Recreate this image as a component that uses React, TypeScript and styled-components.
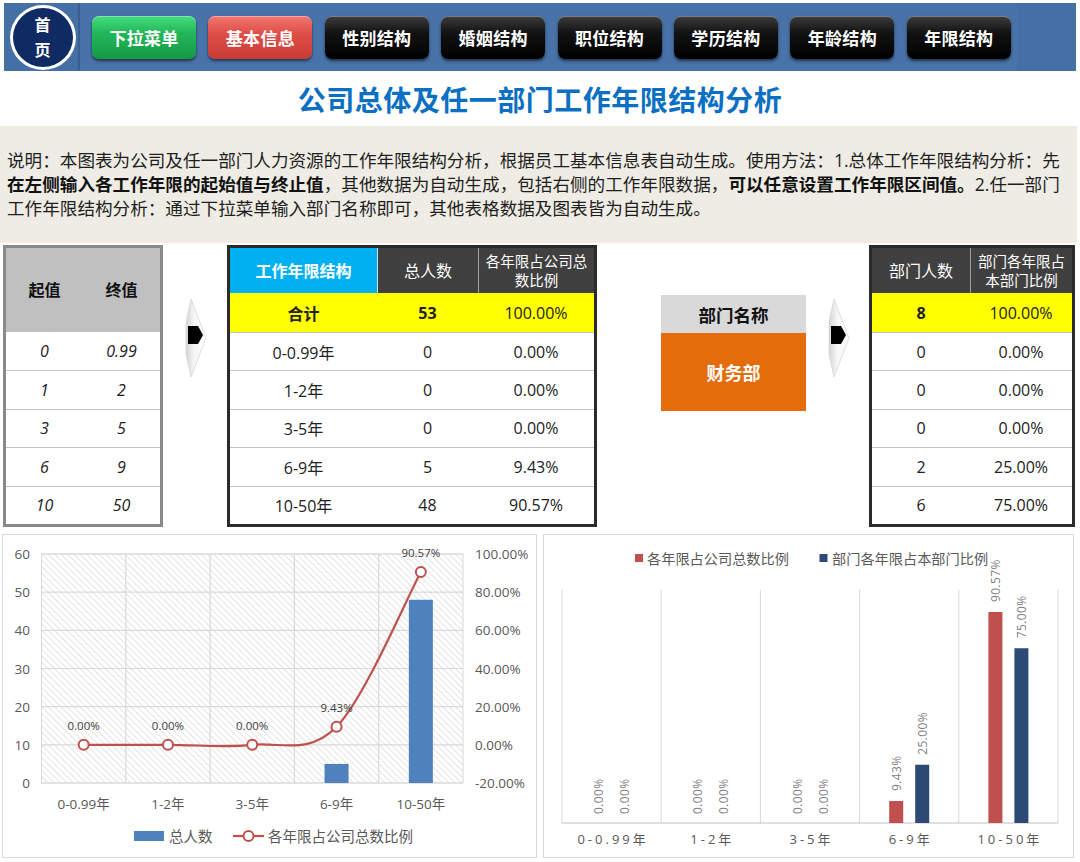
import React from 'react';
import styled, { createGlobalStyle } from 'styled-components';

const GlobalStyle = createGlobalStyle`
  * { box-sizing: border-box; }
  html, body { margin: 0; padding: 0; background: #fff; }
  body {
    font-family: "Open Sans", "Noto Sans CJK SC", sans-serif;
    color: #222;
  }
`;

const cats = ['0-0.99年', '1-2年', '3-5年', '6-9年', '10-50年'];
const ranges = [
  ['0', '0.99'],
  ['1', '2'],
  ['3', '5'],
  ['6', '9'],
  ['10', '50'],
];
const totals = [0, 0, 0, 5, 48];
const companyPct = [0, 0, 0, 9.43, 90.57];
const deptCount = [0, 0, 0, 2, 6];
const deptPct = [0, 0, 0, 25, 75];
const pct = (v: number) => v.toFixed(2) + '%';

const navItems: { label: string; tone: 'green' | 'red' | 'black' }[] = [
  { label: '下拉菜单', tone: 'green' },
  { label: '基本信息', tone: 'red' },
  { label: '性别结构', tone: 'black' },
  { label: '婚姻结构', tone: 'black' },
  { label: '职位结构', tone: 'black' },
  { label: '学历结构', tone: 'black' },
  { label: '年龄结构', tone: 'black' },
  { label: '年限结构', tone: 'black' },
];

const toneBg = {
  green: 'linear-gradient(#44de7e, #22b659 40%, #159a45)',
  red: 'linear-gradient(#f27670, #df4f48 40%, #c93b36)',
  black: 'linear-gradient(#3c3c3c, #121212 40%, #000)',
};

const Page = styled.div`
  width: 1080px;
  height: 862px;
  overflow: hidden;
  padding-top: 3px;
`;

const TopBar = styled.div`
  margin: 0 4px;
  height: 68px;
  display: flex;
  background: #4570a6;
`;

const HomeBlock = styled.div`
  width: 76px;
  padding-left: 3px;
  display: flex;
  align-items: center;
  justify-content: center;
  border-right: 2px solid #3a5e90;
`;

const HomeBadge = styled.div`
  width: 66px;
  height: 65px;
  border-radius: 50%;
  border: 3px solid #fff;
  background: #102a63;
  color: #fff;
  display: flex;
  flex-direction: column;
  align-items: center;
  justify-content: center;
  font-family: "Noto Sans CJK SC", sans-serif;
  font-weight: 700;
  font-size: 16px;
  line-height: 25px;
`;

const NavPanel = styled.div`
  width: 937px;
  display: flex;
  align-items: center;
  gap: 12.4px;
  padding-left: 12px;
  background: #4873a9;
`;

const NavButton = styled.div<{ $tone: 'green' | 'red' | 'black' }>`
  width: 104px;
  height: 43px;
  border-radius: 7px;
  display: flex;
  align-items: center;
  justify-content: center;
  color: #fff;
  font-family: "Noto Sans CJK SC", sans-serif;
  font-weight: 700;
  font-size: 17px;
  letter-spacing: 0.3px;
  background: ${p => toneBg[p.$tone]};
  box-shadow: 0 2px 3px rgba(0, 0, 0, 0.55), inset 0 1px 0 rgba(255, 255, 255, 0.35);
`;

const Title = styled.h1`
  margin: 0;
  height: 55px;
  display: flex;
  align-items: center;
  justify-content: center;
  font-family: "Noto Sans CJK SC", sans-serif;
  font-size: 28px;
  font-weight: 700;
  letter-spacing: 0.5px;
  color: #0b70c2;
`;

const Note = styled.div`
  height: 117px;
  margin-right: 3px;
  background: #eeece4;
  padding: 22px 0 0 7px;
  font-size: 17.6px;
  line-height: 24px;
  color: #1e1e1e;
  white-space: nowrap;
`;

const Emph = styled.strong`
  font-weight: 700;
  color: #111;
`;

const DataRow = styled.div`
  display: flex;
  align-items: flex-start;
  margin-top: 2px;
  height: 282px;
`;

const Frame = styled.div<{ $w: number; $edge: string; $left?: number }>`
  width: ${p => p.$w}px;
  margin-left: ${p => p.$left ?? 0}px;
  border: 3px solid ${p => p.$edge};
  background: #fff;
`;

const Row = styled.div<{ $cols: string; $h: number; $bg?: string; $line?: boolean }>`
  display: grid;
  grid-template-columns: ${p => p.$cols};
  height: ${p => p.$h}px;
  background: ${p => p.$bg ?? '#fff'};
  border-top: ${p => (p.$line ? '1px solid #c4c4c4' : 'none')};
`;

const Cell = styled.div<{ $bold?: boolean; $italic?: boolean }>`
  display: flex;
  align-items: center;
  justify-content: center;
  font-size: 16px;
  font-weight: ${p => (p.$bold ? 700 : 400)};
  font-style: ${p => (p.$italic ? 'italic' : 'normal')};
  color: #222;
`;

const HeadCell = styled.div<{ $bg: string; $sep?: string; $small?: boolean; $bold?: boolean; $dark?: boolean }>`
  display: flex;
  align-items: center;
  justify-content: center;
  text-align: center;
  background: ${p => p.$bg};
  border-left: ${p => (p.$sep ? `1px solid ${p.$sep}` : 'none')};
  color: ${p => (p.$dark ? '#111' : '#fff')};
  font-size: ${p => (p.$small ? '14.5px' : '16px')};
  line-height: ${p => (p.$small ? '19px' : '22px')};
  font-weight: ${p => (p.$bold ? 700 : 400)};
`;

const ArrowSlot = styled.div<{ $w: number }>`
  width: ${p => p.$w}px;
  display: flex;
  justify-content: center;
  padding-top: 53px;
`;

const Gap = styled.div<{ $w: number }>`
  width: ${p => p.$w}px;
`;

const DeptBlock = styled.div`
  width: 145px;
  margin-top: 50px;
`;

const DeptHead = styled.div`
  height: 38px;
  background: #d9d9d9;
  display: flex;
  align-items: center;
  justify-content: center;
  font-family: "Noto Sans CJK SC", sans-serif;
  font-weight: 700;
  font-size: 17.5px;
  color: #111;
`;

const DeptValue = styled.div`
  height: 78px;
  background: #e46c0a;
  display: flex;
  align-items: center;
  justify-content: center;
  font-family: "Noto Sans CJK SC", sans-serif;
  font-weight: 700;
  font-size: 18px;
  color: #fff;
`;

const ChartRow = styled.div`
  display: flex;
  align-items: flex-start;
  gap: 6px;
  margin-top: 7px;
  padding-left: 2px;
`;

const ChartPanel = styled.div<{ $w: number }>`
  width: ${p => p.$w}px;
  height: 324px;
  border: 1px solid #d9d9d9;
  background: #fff;
  svg {
    display: block;
  }
`;

function Arrow() {
  return (
    <svg width="26" height="80" viewBox="0 0 26 80">
      <defs>
        <linearGradient id="arrowFace" x1="0" y1="0" x2="1" y2="0">
          <stop offset="0" stopColor="#d4d4d4" />
          <stop offset="0.4" stopColor="#f6f6f6" />
          <stop offset="1" stopColor="#ffffff" />
        </linearGradient>
      </defs>
      <polygon points="9,1 24,40 9,79 4,56 4,24" fill="url(#arrowFace)" stroke="#d6d6d6" strokeWidth="0.8" />
      <polygon points="6,28 16,28 21,37 16,46 6,46" fill="#000" />
    </svg>
  );
}

function smoothPath(pts: number[][]) {
  let d = `M${pts[0][0]},${pts[0][1]}`;
  for (let i = 0; i < pts.length - 1; i++) {
    const p0 = pts[i - 1] ?? pts[i];
    const p1 = pts[i];
    const p2 = pts[i + 1];
    const p3 = pts[i + 2] ?? p2;
    const c1x = p1[0] + (p2[0] - p0[0]) / 6;
    const c1y = p1[1] + (p2[1] - p0[1]) / 6;
    const c2x = p2[0] - (p3[0] - p1[0]) / 6;
    const c2y = p2[1] - (p3[1] - p1[1]) / 6;
    d += ` C${c1x},${c1y} ${c2x},${c2y} ${p2[0]},${p2[1]}`;
  }
  return d;
}

function ComboChart() {
  const x0 = 38.5, x1 = 460, y0 = 19, y1 = 248;
  const band = (x1 - x0) / 5;
  const h = y1 - y0;
  const cx = (i: number) => x0 + band * (i + 0.5);
  const yCount = (v: number) => y1 - (v / 60) * h;
  const yPct = (p: number) => y1 - ((p + 20) / 120) * h;
  const pts = companyPct.map((p, i) => [cx(i), yPct(p)]);

  return (
    <svg width="533" height="322">
      <defs>
        <pattern id="hatch" width="4.5" height="4.5" patternUnits="userSpaceOnUse" patternTransform="rotate(-45)">
          <line x1="0" y1="0" x2="0" y2="4.5" stroke="#d6d6d6" strokeWidth="1.3" />
        </pattern>
      </defs>
      <rect x={x0} y={y0} width={x1 - x0} height={h} fill="url(#hatch)" stroke="#d9d9d9" />
      {[60, 50, 40, 30, 20, 10, 0].map(v => (
        <g key={v}>
          <line x1={x0} x2={x1} y1={yCount(v)} y2={yCount(v)} stroke="#d9d9d9" strokeWidth="1.2" />
          <text x="27" y={yCount(v)} textAnchor="end" dominantBaseline="central" fontSize="13.5" fill="#595959">
            {v}
          </text>
        </g>
      ))}
      {[100, 80, 60, 40, 20, 0, -20].map(p => (
        <text key={p} x="472" y={yPct(p)} dominantBaseline="central" fontSize="13.5" fill="#595959">
          {pct(p)}
        </text>
      ))}
      {[1, 2, 3, 4].map(k => (
        <line key={k} x1={x0 + band * k} x2={x0 + band * k} y1={y0} y2={y1} stroke="#d9d9d9" strokeWidth="1.2" />
      ))}
      {totals.map((v, i) =>
        v > 0 ? <rect key={i} x={cx(i) - 12} y={yCount(v)} width="24" height={y1 - yCount(v)} fill="#4f81bd" /> : null
      )}
      <path d={smoothPath(pts)} fill="none" stroke="#c0504d" strokeWidth="2.2" />
      {pts.map(([x, y], i) => (
        <g key={i}>
          <circle cx={x} cy={y} r="5" fill="#fff" stroke="#c0504d" strokeWidth="2" />
          <text x={x} y={y - 19} textAnchor="middle" dominantBaseline="central" fontSize="11.5" fill="#404040">
            {pct(companyPct[i])}
          </text>
        </g>
      ))}
      {cats.map((c, i) => (
        <text key={c} x={cx(i)} y="269" textAnchor="middle" dominantBaseline="central" fontSize="13.5" fill="#595959">
          {c}
        </text>
      ))}
      <rect x="131" y="296" width="30" height="10" fill="#4f81bd" />
      <text x="166" y="301" dominantBaseline="central" fontSize="14.5" fill="#595959">总人数</text>
      <line x1="230" x2="261" y1="301" y2="301" stroke="#c0504d" strokeWidth="2.2" />
      <circle cx="245.5" cy="301" r="5" fill="#fff" stroke="#c0504d" strokeWidth="2" />
      <text x="265" y="301" dominantBaseline="central" fontSize="14.5" fill="#595959">各年限占公司总数比例</text>
    </svg>
  );
}

function CompareChart() {
  const x0 = 18, x1 = 514, y0 = 55, y1 = 288;
  const band = (x1 - x0) / 5;
  const k = (y1 - y0) / 100;
  const cx = (i: number) => x0 + band * (i + 0.5);
  const series = [
    { data: companyPct, color: '#c0504d', off: -13 },
    { data: deptPct, color: '#2c4a74', off: 13 },
  ];

  return (
    <svg width="529" height="322">
      {[0, 1, 2, 3, 4, 5].map(i => (
        <line key={i} x1={x0 + band * i} x2={x0 + band * i} y1={y0} y2={y1} stroke="#d9d9d9" strokeWidth="1" />
      ))}
      <line x1={x0} x2={x1} y1={y1} y2={y1} stroke="#bfbfbf" strokeWidth="1.2" />
      {series.map(s =>
        s.data.map((v, i) => {
          const bx = cx(i) + s.off;
          const top = y1 - v * k;
          const ly = v > 0 ? top - 10 : y1 - 9;
          return (
            <g key={s.color + i}>
              {v > 0 && <rect x={bx - 7} y={top} width="14" height={y1 - top} fill={s.color} />}
              <text
                x={bx}
                y={ly}
                transform={`rotate(-90 ${bx} ${ly})`}
                dominantBaseline="central"
                fontSize="12"
                letterSpacing="0.4"
                fill="#7f7f7f"
              >
                {pct(v)}
              </text>
            </g>
          );
        })
      )}
      {cats.map((c, i) => (
        <text key={c} x={cx(i) + 1.5} y="304" textAnchor="middle" dominantBaseline="central" fontSize="13" letterSpacing="3" fill="#595959">
          {c}
        </text>
      ))}
      <rect x="91" y="19" width="8" height="8" fill="#c0504d" />
      <text x="103" y="23" dominantBaseline="central" fontSize="14.2" fill="#595959">各年限占公司总数比例</text>
      <rect x="275.5" y="19" width="8" height="8" fill="#2c4a74" />
      <text x="288" y="23" dominantBaseline="central" fontSize="14.2" fill="#595959">部门各年限占本部门比例</text>
    </svg>
  );
}

export default function App() {
  return (
    <Page>
      <GlobalStyle />
      <TopBar>
        <HomeBlock>
          <HomeBadge>
            <span>首</span>
            <span>页</span>
          </HomeBadge>
        </HomeBlock>
        <NavPanel>
          {navItems.map(n => (
            <NavButton key={n.label} $tone={n.tone}>
              {n.label}
            </NavButton>
          ))}
        </NavPanel>
      </TopBar>

      <Title>公司总体及任一部门工作年限结构分析</Title>

      <Note>
        说明：本图表为公司及任一部门人力资源的工作年限结构分析，根据员工基本信息表自动生成。使用方法：1.总体工作年限结构分析：先
        <br />
        <Emph>在左侧输入各工作年限的起始值与终止值</Emph>，其他数据为自动生成，包括右侧的工作年限数据，
        <Emph>可以任意设置工作年限区间值。</Emph>2.任一部门
        <br />
        工作年限结构分析：通过下拉菜单输入部门名称即可，其他表格数据及图表皆为自动生成。
      </Note>

      <DataRow>
        <Frame $w={160} $edge="#8a8a8a" $left={3}>
          <Row $cols="1fr 1fr" $h={84} $bg="#c0c0c0">
            <HeadCell $bg="transparent" $bold $dark>起值</HeadCell>
            <HeadCell $bg="transparent" $bold $dark>终值</HeadCell>
          </Row>
          {ranges.map(([a, b], i) => (
            <Row key={i} $cols="1fr 1fr" $h={38.4} $line={i > 0}>
              <Cell $italic>{a}</Cell>
              <Cell $italic>{b}</Cell>
            </Row>
          ))}
        </Frame>

        <ArrowSlot $w={64}>
          <Arrow />
        </ArrowSlot>

        <Frame $w={370} $edge="#2b2b2b">
          <Row $cols="147px 101px 1fr" $h={45}>
            <HeadCell $bg="#00b0f0" $bold>工作年限结构</HeadCell>
            <HeadCell $bg="#404040" $sep="#cfe3ee">总人数</HeadCell>
            <HeadCell $bg="#404040" $sep="#a0a0a0" $small>
              各年限占公司总
              <br />
              数比例
            </HeadCell>
          </Row>
          <Row $cols="147px 101px 1fr" $h={39} $bg="#ffff00">
            <Cell $bold>合计</Cell>
            <Cell $bold>53</Cell>
            <Cell>100.00%</Cell>
          </Row>
          {cats.map((c, i) => (
            <Row key={c} $cols="147px 101px 1fr" $h={38.4} $line>
              <Cell>{c}</Cell>
              <Cell>{totals[i]}</Cell>
              <Cell>{pct(companyPct[i])}</Cell>
            </Row>
          ))}
        </Frame>

        <Gap $w={64} />

        <DeptBlock>
          <DeptHead>部门名称</DeptHead>
          <DeptValue>财务部</DeptValue>
        </DeptBlock>

        <ArrowSlot $w={63}>
          <Arrow />
        </ArrowSlot>

        <Frame $w={206} $edge="#2b2b2b">
          <Row $cols="98px 1fr" $h={45}>
            <HeadCell $bg="#404040">部门人数</HeadCell>
            <HeadCell $bg="#404040" $sep="#a0a0a0" $small>
              部门各年限占
              <br />
              本部门比例
            </HeadCell>
          </Row>
          <Row $cols="98px 1fr" $h={39} $bg="#ffff00">
            <Cell $bold>8</Cell>
            <Cell>100.00%</Cell>
          </Row>
          {deptCount.map((v, i) => (
            <Row key={i} $cols="98px 1fr" $h={38.4} $line>
              <Cell>{v}</Cell>
              <Cell>{pct(deptPct[i])}</Cell>
            </Row>
          ))}
        </Frame>
      </DataRow>

      <ChartRow>
        <ChartPanel $w={535}>
          <ComboChart />
        </ChartPanel>
        <ChartPanel $w={531}>
          <CompareChart />
        </ChartPanel>
      </ChartRow>
    </Page>
  );
}
